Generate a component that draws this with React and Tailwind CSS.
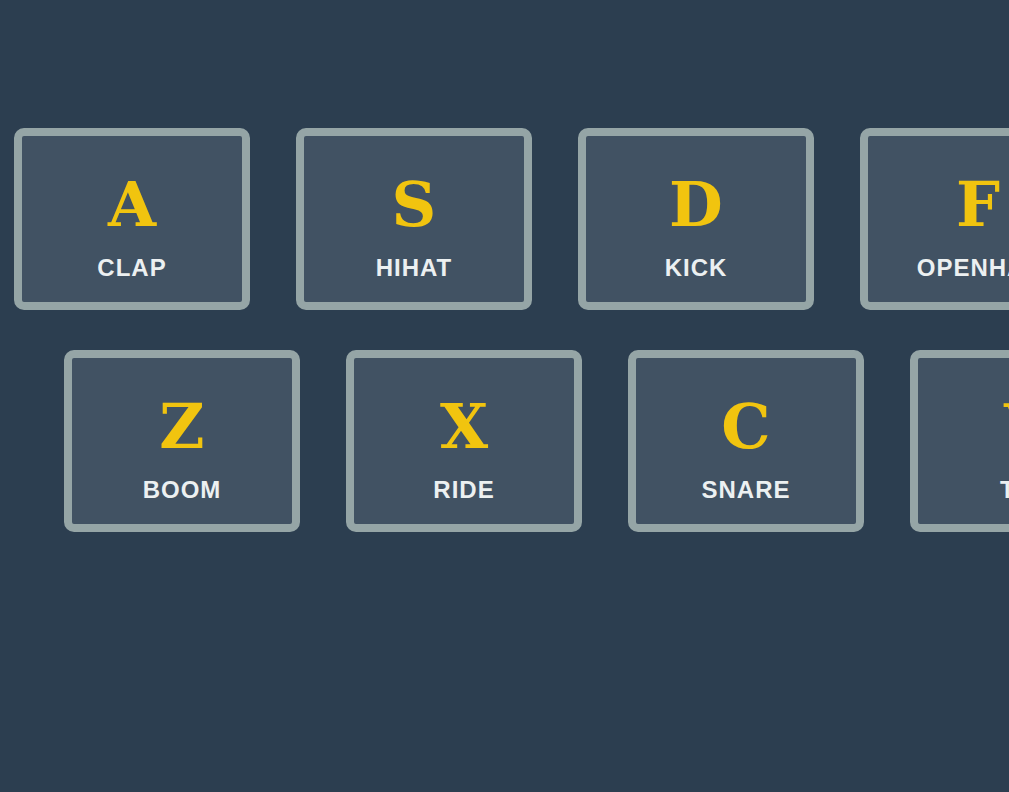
const rows = [
  { offset: 'pl-[14px]', keys: [['A', 'clap'], ['S', 'hihat'], ['D', 'kick'], ['F', 'openhat']] },
  { offset: 'pl-[64px]', keys: [['Z', 'boom'], ['X', 'ride'], ['C', 'snare'], ['V', 'tom']] },
]

function Key({ letter, sound }) {
  return (
    <div className="w-[236px] h-[182px] shrink-0 flex flex-col items-center border-8 border-[#95a5a6] rounded-[10px] bg-[#415263]">
      <kbd className="mt-[38px] text-[62px] leading-[1] font-bold text-[#f1c40f]" style={{ fontFamily: '"DejaVu Serif", serif' }}>
        {letter}
      </kbd>
      <span className="mt-[20px] text-[24px] leading-[1] font-semibold uppercase tracking-[1px] text-[#ecf0f1]" style={{ fontFamily: '"Liberation Sans", Arial, sans-serif' }}>
        {sound}
      </span>
    </div>
  )
}

export default function App() {
  return (
    <div className="w-full min-h-screen h-[792px] overflow-hidden bg-[#2c3e50] pt-[128px]">
      {rows.map((row, i) => (
        <div key={i} className={`flex gap-[46px] ${row.offset} ${i > 0 ? 'mt-[40px]' : ''}`}>
          {row.keys.map(([letter, sound]) => (
            <Key key={letter} letter={letter} sound={sound} />
          ))}
        </div>
      ))}
    </div>
  )
}
